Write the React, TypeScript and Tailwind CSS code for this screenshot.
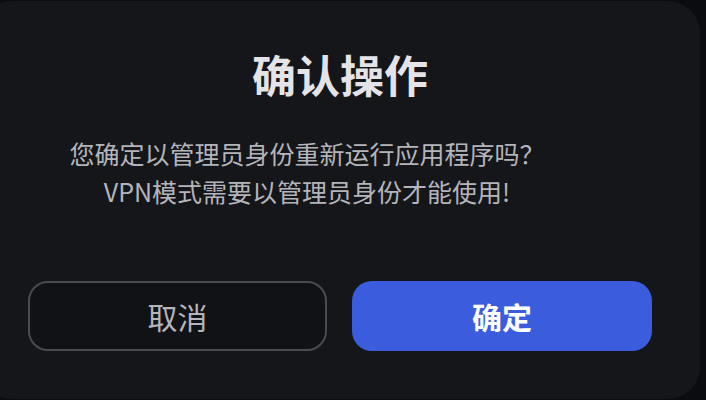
export default function App() {
  return (
    <div className="h-[400px] w-[706px] overflow-hidden bg-[#0b0c0f] font-['Noto_Sans_CJK_SC','Noto_Sans',sans-serif]">
      <div className="ml-[-20px] mt-[1px] flex h-[398px] w-[720px] flex-col items-center rounded-[32px] bg-[#15161a] px-[48px] pt-[51px]">
        <h1 className="text-[44px] font-bold leading-[44px] text-[#e4e4e8]">
          确认操作
        </h1>
        <div className="mr-[66px] mt-[38px] text-center text-[25px] leading-[38px] text-[#b4b5ba]">
          <p>您确定以管理员身份重新运行应用程序吗？</p>
          <p>VPN模式需要以管理员身份才能使用!</p>
        </div>
        <div className="mt-[71px] flex w-full gap-[25px]">
          <button className="h-[70px] w-[299px] rounded-[20px] border-2 border-[#4a4b51] bg-[#111215] text-[30px] text-[#b4b5ba]">
            取消
          </button>
          <button className="h-[70px] w-[300px] rounded-[20px] bg-[#3b5ddd] text-[30px] font-bold text-white">
            确定
          </button>
        </div>
      </div>
    </div>
  );
}
